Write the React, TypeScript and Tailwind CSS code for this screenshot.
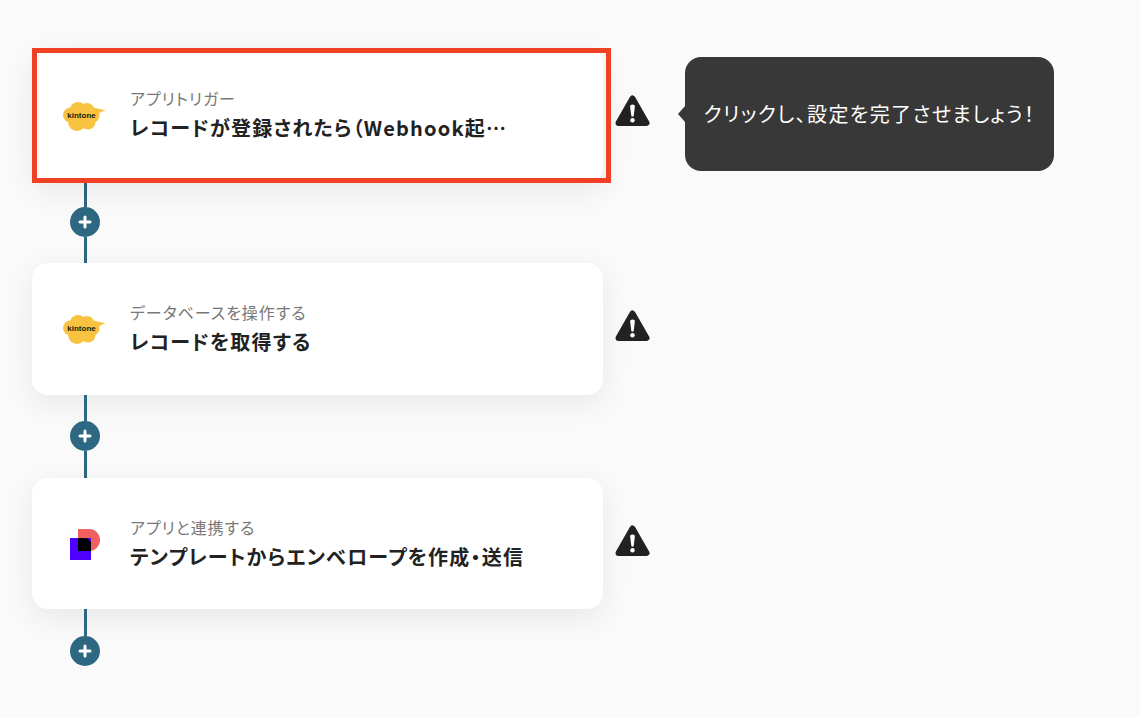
function KintoneLogo() {
  return (
    <svg width="44" height="30" viewBox="0 0 44 30" className="shrink-0">
      <g fill="#f8c340">
        <circle cx="7.5" cy="13" r="7.5" />
        <circle cx="15" cy="8" r="8" />
        <circle cx="24" cy="8.5" r="7.5" />
        <circle cx="30" cy="14" r="6.5" />
        <circle cx="25" cy="20" r="7.5" />
        <circle cx="14" cy="20" r="9" />
        <path d="M28 5 L43 8.5 Q36 9.5 33 15 Z" />
      </g>
      <text x="18.5" y="16" textAnchor="middle" fontSize="8" fontWeight="700" fill="#1f1a0e" fontFamily="Liberation Sans, sans-serif">
        kintone
      </text>
    </svg>
  );
}

function DocusignLogo() {
  return (
    <svg width="32" height="32" viewBox="0 0 32 32" className="shrink-0 mb-[4px]">
      <path d="M9 1 H20 A11 11 0 0 1 20 23 H9 Z" fill="#f0605e" />
      <rect x="1" y="10" width="21" height="22" fill="#4c00ff" />
      <path d="M9 10 H17 Q19 10 20 12 L22 14 V23 H9 Z" fill="#000000" />
    </svg>
  );
}

function WarningIcon() {
  return (
    <svg width="35" height="33" viewBox="0 0 35 33" className="shrink-0">
      <path d="M17.5 3.5 L31.5 28 H3.5 Z" fill="#222222" stroke="#222222" strokeWidth="6" strokeLinejoin="round" />
      <path d="M15.1 11 Q15.1 9.5 17.5 9.5 Q19.9 9.5 19.9 11 L18.7 21 Q17.5 22.3 16.3 21 Z" fill="#ffffff" />
      <circle cx="17.5" cy="25.3" r="2.2" fill="#ffffff" />
    </svg>
  );
}

function PlusButton() {
  return (
    <div className="w-[30px] h-[30px] rounded-full bg-[#2e6781] flex items-center justify-center">
      <svg width="14" height="14" viewBox="0 0 14 14">
        <path d="M7 2 V12 M2 7 H12" stroke="#ffffff" strokeWidth="3" strokeLinecap="round" />
      </svg>
    </div>
  );
}

function Connector({ top, bottom }: { top: string; bottom: string }) {
  return (
    <div className="w-[30px] ml-[38px] flex flex-col items-center">
      <div className={`w-[3px] bg-[#2e6781] ${top}`}></div>
      <PlusButton />
      <div className={`w-[3px] bg-[#2e6781] ${bottom}`}></div>
    </div>
  );
}

function Card({ logo, label, title, height = "h-[132px]" }: { logo: React.ReactNode; label: string; title: string; height?: string }) {
  return (
    <div className={`w-[571px] ${height} bg-white rounded-[16px] shadow-[0_8px_32px_rgba(0,0,0,0.08)] flex items-center pl-[31px]`}>
      <div className="w-[44px] mt-[2px] flex justify-center">{logo}</div>
      <div className="ml-[23px] min-w-0 mb-[2px]">
        <p className="text-[16px] leading-[26px] tracking-[0.06em] text-[#777777]">{label}</p>
        <p className="whitespace-nowrap text-[20px] leading-[33px] tracking-[0.06em] font-semibold text-[#222222]">{title}</p>
      </div>
    </div>
  );
}

export default function App() {
  return (
    <div
      className="w-[1140px] h-[718px] overflow-hidden bg-[#fafafa] pt-[48px] pl-[32px] [font-feature-settings:'palt']"
      style={{ fontFamily: '"Noto Sans CJK JP", "Noto Sans", sans-serif' }}
    >
      {/* Step 1 - selected */}
      <div className="flex items-start h-[135px]">
        <div className="relative w-[579px] h-[135px]">
          <Card logo={<KintoneLogo />} label="アプリトリガー" title="レコードが登録されたら（Webhook起…" height="h-[135px]" />
          <div className="absolute inset-0 border-[5px] border-[#f04124]"></div>
        </div>
        <div className="ml-[4px] mt-[47px]">
          <WarningIcon />
        </div>
        <div className="relative ml-[35px] mt-[9px] w-[369px] h-[114px] rounded-[16px] bg-[#383838] flex items-center justify-center text-[20px] tracking-[0.07em] text-white">
          <span className="absolute -left-[7px] top-1/2 -translate-y-1/2 w-0 h-0 border-y-[8px] border-y-transparent border-r-[7px] border-r-[#383838]"></span>
          クリックし、設定を完了させましょう！
        </div>
      </div>
      <Connector top="h-[24px]" bottom="h-[26px]" />

      {/* Step 2 */}
      <div className="flex items-start h-[132px]">
        <Card logo={<KintoneLogo />} label="データベースを操作する" title="レコードを取得する" />
        <div className="ml-[12px] mt-[47px]">
          <WarningIcon />
        </div>
      </div>
      <Connector top="h-[26px]" bottom="h-[27px]" />

      {/* Step 3 */}
      <div className="flex items-start h-[131px]">
        <Card logo={<DocusignLogo />} label="アプリと連携する" title="テンプレートからエンベロープを作成・送信" height="h-[131px] pt-[2px]" />
        <div className="ml-[12px] mt-[47px]">
          <WarningIcon />
        </div>
      </div>
      <Connector top="h-[27px]" bottom="h-0" />
    </div>
  );
}
